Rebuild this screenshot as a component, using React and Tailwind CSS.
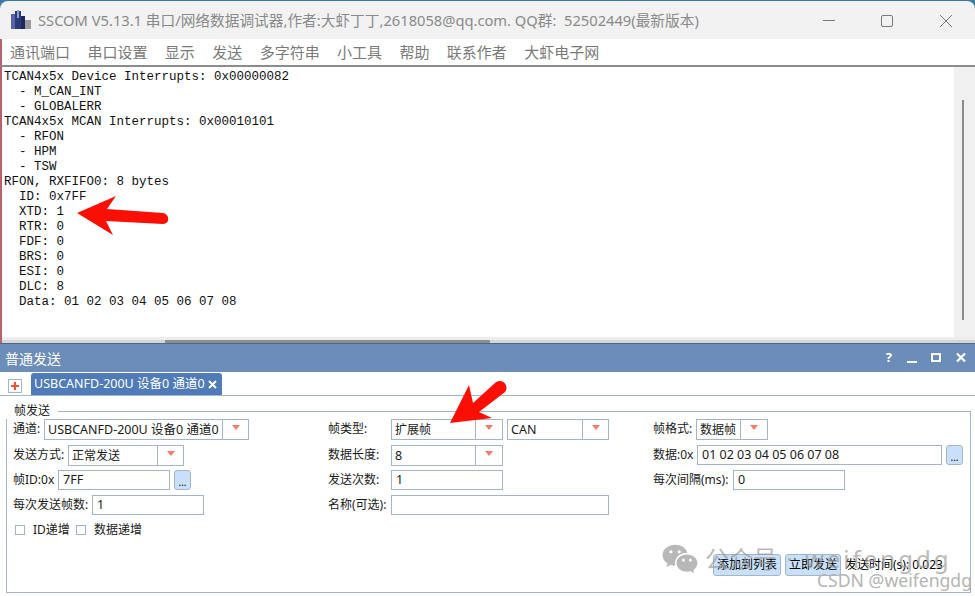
import { RiWechatFill } from "react-icons/ri";

const LOG_LINES = [
  "TCAN4x5x Device Interrupts: 0x00000082",
  "  - M_CAN_INT",
  "  - GLOBALERR",
  "TCAN4x5x MCAN Interrupts: 0x00010101",
  "  - RFON",
  "  - HPM",
  "  - TSW",
  "RFON, RXFIFO0: 8 bytes",
  "  ID: 0x7FF",
  "  XTD: 1",
  "  RTR: 0",
  "  FDF: 0",
  "  BRS: 0",
  "  ESI: 0",
  "  DLC: 8",
  "  Data: 01 02 03 04 05 06 07 08",
];

const MENU = ["通讯端口", "串口设置", "显示", "发送", "多字符串", "小工具", "帮助", "联系作者", "大虾电子网"];

function Combo({ value, className, dividerClass }) {
  return (
    <div className={`flex border border-[#a5b5c8] bg-white shrink-0 ${className}`}>
      <div className={`px-[3px] border-r border-[#a5b5c8] whitespace-nowrap overflow-hidden leading-[19px] ${dividerClass}`}>
        {value}
      </div>
      <div className="flex-1 flex items-center justify-center">
        <div className="w-0 h-0 border-l-[4px] border-r-[4px] border-t-[5px] border-l-transparent border-r-transparent border-t-[#f47c6c] mb-[3px]" />
      </div>
    </div>
  );
}

function Input({ value, className }) {
  return (
    <div className={`border border-[#a5b5c8] bg-white px-[4px] leading-[18px] text-[12.5px] shrink-0 ${className}`}>{value}</div>
  );
}

function DotsButton() {
  return (
    <div className="w-[17px] h-[20px] ml-[4px] shrink-0 rounded-[3px] border border-[#a5b5c8] bg-[#c9e0fb] flex items-end justify-center text-[10px] leading-[14px] text-black">
      ...
    </div>
  );
}

function Check({ label, className }) {
  return (
    <div className={`flex items-center ${className}`}>
      <div className="w-[10px] h-[10px] border border-[#a5b5c8] bg-white mr-[8px]" />
      <span>{label}</span>
    </div>
  );
}

function Row({ children, className }) {
  return <div className={`flex items-center ${className}`}>{children}</div>;
}

function Label({ children, className }) {
  return <span className={`whitespace-nowrap shrink-0 ${className}`}>{children}</span>;
}

export default function App() {
  return (
    <div
      className="relative w-[975px] h-[596px] overflow-hidden bg-[#3d7b9e] flex flex-col pt-px"
      style={{ fontFamily: '"Noto Sans", "Noto Sans CJK SC", sans-serif' }}
    >
      {/* Title bar */}
      <div className="h-[38px] bg-[#f2f2f2] rounded-t-lg flex items-center shrink-0 text-[#8a8a8a]">
        <svg width="20" height="20" viewBox="0 0 20 20" className="ml-[11px] mr-[7px] shrink-0">
          <rect x="0" y="4" width="4" height="15" fill="#5a63a8" />
          <rect x="4" y="1" width="6" height="18" fill="#2c3a78" />
          <rect x="6" y="0" width="2" height="8" fill="#8aa0d8" />
          <rect x="10" y="6" width="4" height="13" fill="#1f2a5c" />
          <rect x="14" y="10" width="6" height="9" fill="#9a9a9a" />
        </svg>
        <span className="text-[14.7px] whitespace-nowrap">
          SSCOM V5.13.1 串口/网络数据调试器,作者:大虾丁丁,2618058@qq.com. QQ群:&nbsp;&nbsp;52502449(最新版本)
        </span>
        <svg width="146" height="38" viewBox="0 0 146 38" className="ml-auto mr-[6px] shrink-0" fill="none" stroke="#7a7a7a">
          <path d="M0 19.5H12" />
          <rect x="58.5" y="14.5" width="11" height="11" rx="1.5" />
          <path d="M117 14L129 26M129 14L117 26" />
        </svg>
      </div>

      {/* Menu */}
      <div className="h-[26px] bg-white flex items-center pl-[8px] gap-[17.4px] text-[15px] text-[#7a7a7a] shrink-0 border-l-2 border-l-[#b8606c]">
        {MENU.map((m) => (
          <span key={m} className="whitespace-nowrap">
            {m}
          </span>
        ))}
      </div>

      {/* Receive area */}
      <div className="h-[278px] shrink-0 flex flex-col bg-white border-l-2 border-l-[#b8606c] border-t-2 border-t-[#8c8c8c]">
        <div className="flex-1 flex min-h-0">
          <pre
            className="flex-1 text-[12.5px] leading-[15px] pl-[2px] pt-[3px] text-[#111]"
            style={{ fontFamily: '"Liberation Mono", monospace' }}
          >
            {LOG_LINES.join("\n")}
          </pre>
          <div className="w-[21px] bg-[#f0f0f0] flex justify-center pt-[33px] pr-[4px]">
            <div className="w-[2px] h-[220px] bg-[#8a8a8a]" />
          </div>
        </div>
        <div className="h-[3px] bg-[#ededed]" />
        <div className="h-[3px] bg-[#d6d6d6] pl-[163px]">
          <div className="w-[325px] h-full bg-[#8f8f8f]" />
        </div>
      </div>

      {/* Send panel */}
      <div className="flex-1 flex flex-col bg-white text-[12px] text-[#1a1a1a] border-t border-t-[#4a6a90] min-h-0">
        <div className="h-[28px] bg-[#6b8db8] flex items-center justify-between pl-[5px] pr-[9px] text-white text-[14px] shrink-0">
          <span>普通发送</span>
          <div className="flex items-center">
            <span className="font-bold text-[13px] mr-[4px]">?</span>
            <svg width="70" height="14" viewBox="0 0 70 14" fill="none" stroke="white" strokeWidth="2">
              <path d="M11 11H21" />
              <rect x="36" y="3" width="8" height="7" />
              <path d="M61 2.5L69 10.5M69 2.5L61 10.5" strokeWidth="2.2" />
            </svg>
          </div>
        </div>

        <div className="h-[24px] flex items-end border-b border-[#a5b5c8] shrink-0 pl-[8px]">
          <div className="w-[14px] h-[14px] mb-[2px] border border-[#a5b5c8] flex items-center justify-center">
            <svg width="8" height="8" viewBox="0 0 8 8" stroke="#f0503c" strokeWidth="2">
              <path d="M4 0V8M0 4H8" />
            </svg>
          </div>
          <div className="ml-[9px] w-[191px] h-[22px] bg-[#4f7bb8] rounded-t-[3px] text-white text-[12.5px] flex items-center pl-[3px] whitespace-nowrap">
            USBCANFD-200U 设备0 通道0
            <svg width="9" height="9" viewBox="0 0 9 9" stroke="white" strokeWidth="2" className="ml-[3px]">
              <path d="M1 1L8 8M8 1L1 8" />
            </svg>
          </div>
        </div>

        <fieldset className="mx-[6px] mt-[7px] h-[190px] border border-[#a5b5c8] shrink-0 relative pl-[6px] pr-[7px]">
          <legend className="relative -ml-[7px] pl-[8px] pr-[8px] bg-white leading-[16px]">帧发送</legend>

          <div className="grid grid-cols-[315px_325px_1fr] grid-rows-[26px_26px_24px_25px] -mt-[3px]">
            <Row>
              <Label className="w-[31px]">通道:</Label>
              <Combo value="USBCANFD-200U 设备0 通道0" className="w-[205px] h-[21px] text-[12.5px]" dividerClass="w-[178px]" />
            </Row>
            <Row>
              <Label className="w-[63px]">帧类型:</Label>
              <Combo value="扩展帧" className="w-[112px] h-[21px]" dividerClass="w-[84px]" />
              <Combo value="CAN" className="w-[102px] h-[21px] ml-[4px] text-[12.5px]" dividerClass="w-[75px]" />
            </Row>
            <Row>
              <Label className="w-[43px]">帧格式:</Label>
              <Combo value="数据帧" className="w-[72px] h-[21px]" dividerClass="w-[44px]" />
            </Row>

            <Row>
              <Label className="w-[55px]">发送方式:</Label>
              <Combo value="正常发送" className="w-[116px] h-[21px]" dividerClass="w-[89px]" />
            </Row>
            <Row>
              <Label className="w-[63px]">数据长度:</Label>
              <Combo value="8" className="w-[112px] h-[21px] text-[12.5px]" dividerClass="w-[84px]" />
            </Row>
            <Row>
              <Label className="w-[44px]">数据:0x</Label>
              <Input value="01 02 03 04 05 06 07 08" className="w-[245px] h-[20px]" />
              <DotsButton />
            </Row>

            <Row>
              <Label className="w-[45px]">帧ID:0x</Label>
              <Input value="7FF" className="w-[112px] h-[20px]" />
              <DotsButton />
            </Row>
            <Row>
              <Label className="w-[63px]">发送次数:</Label>
              <Input value="1" className="w-[112px] h-[20px]" />
            </Row>
            <Row>
              <Label className="w-[80px]">每次间隔(ms):</Label>
              <Input value="0" className="w-[112px] h-[20px]" />
            </Row>

            <Row>
              <Label className="w-[79px]">每次发送帧数:</Label>
              <Input value="1" className="w-[112px] h-[20px]" />
            </Row>
            <Row>
              <Label className="w-[63px]">名称(可选):</Label>
              <Input value="" className="w-[218px] h-[20px]" />
            </Row>
            <div />
          </div>

          <div className="flex mt-[4px] ml-[2px] h-[18px]">
            <Check label="ID递增" className="w-[61px]" />
            <Check label="数据递增" />
          </div>

          <div className="flex items-center justify-end mt-[15px] pr-[18px]">
            <div className="w-[68px] h-[22px] rounded-[3px] border border-[#a5b5c8] bg-[#c9e0fb] text-center leading-[20px] text-black">
              添加到列表
            </div>
            <div className="w-[56px] h-[22px] ml-[4px] rounded-[3px] border border-[#a5b5c8] bg-[#c9e0fb] text-center leading-[20px] text-black">
              立即发送
            </div>
            <span className="ml-[4px] w-[100px] text-black whitespace-nowrap">发送时间(s): 0.023</span>
          </div>
        </fieldset>
      </div>

      {/* Annotation arrows */}
      <svg className="absolute left-0 top-0 pointer-events-none" width="975" height="596" viewBox="0 0 975 596" fill="#fb0f05">
        <path d="M77 213L116 196L107 209L163 213C170 214 170 224 163 224L106 221L113 235Z" />
        <path d="M450 423L469 385L473 403L495 383C502 377 510 386 505 392L479 412L492 418Z" />
      </svg>

      {/* Watermarks */}
      <div className="absolute left-[661px] top-[540px] flex items-center text-[#9a9a9a]/70 pointer-events-none">
        <RiWechatFill size={38} />
        <span className="ml-[6px] text-[24px] leading-[32px] whitespace-nowrap">
          公众号<span className="tracking-[3px]"> · weifengdg</span>
        </span>
      </div>
      <span className="absolute left-[817px] top-[569px] text-[17.6px] leading-[22px] text-[#b4b4b4] whitespace-nowrap pointer-events-none">
        CSDN @weifengdg
      </span>
    </div>
  );
}
